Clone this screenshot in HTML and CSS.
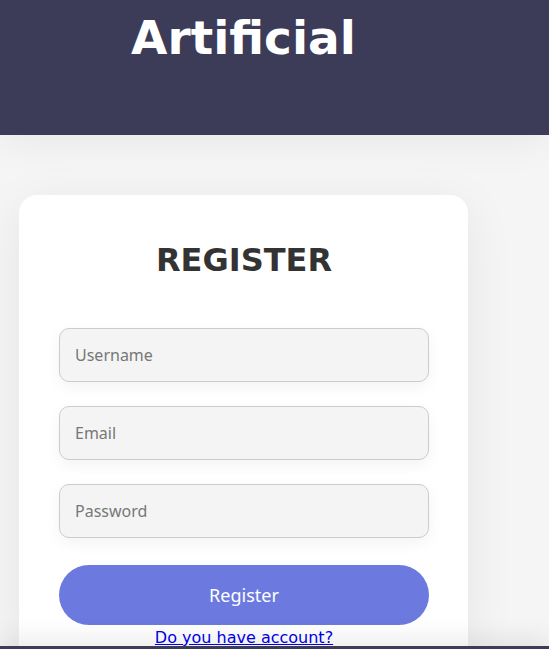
FILE: index.html
```html
<!DOCTYPE html>
<html lang="en">
<head>
<meta charset="utf-8">
<title>Register</title>
<link rel="stylesheet" href="styles.css">
</head>
<body>
<header class="header">
  <div class="header-inner">
    <h1 class="brand">Artificial</h1>
  </div>
</header>
<main class="main">
  <div class="card">
    <h2 class="card-title">REGISTER</h2>
    <form class="form">
      <input class="field" type="text" placeholder="Username">
      <input class="field" type="email" placeholder="Email">
      <input class="field" type="password" placeholder="Password">
      <button class="submit" type="button">Register</button>
    </form>
    <div class="switch"><a href="#" class="switch-link">Do you have account?</a></div>
  </div>
</main>
<footer class="footer"></footer>
</body>
</html>
```
FILE: styles.css
```css
html, body {
  margin: 0;
  padding: 0;
}
body {
  background: #f5f5f5;
  font-family: "DejaVu Sans", sans-serif;
  overflow: hidden;
}
.header {
  background: #3c3b58;
  height: 135px;
  box-shadow: 0 6px 40px rgba(0, 0, 0, 0.06);
  position: relative;
  z-index: 1;
}
.header-inner {
  width: 487px;
  padding-top: 10px;
}
.brand {
  margin: 0;
  color: #ffffff;
  font-family: "DejaVu Sans", sans-serif;
  font-weight: bold;
  font-size: 47px;
  text-align: center;
}
.main {
  width: 487px;
  padding-top: 60px;
}
.card {
  margin: 0 19px;
  background: #ffffff;
  border-radius: 18px 18px 0 0;
  padding: 40px 39px 0 40px;
  box-shadow: 0 10px 50px rgba(0, 0, 0, 0.07);
}
.card-title {
  margin: 6px 0 49px;
  font-family: "DejaVu Sans", sans-serif;
  font-weight: bold;
  font-size: 32px;
  color: #333333;
  text-align: center;
}
.form {
  display: flex;
  flex-direction: column;
  gap: 24px;
}
.field {
  box-sizing: border-box;
  width: 100%;
  height: 54px;
  margin: 0;
  padding: 0 15px;
  border: 1px solid #cccccc;
  border-radius: 10px;
  background: #f4f4f4;
  font-family: "Noto Sans", sans-serif;
  font-size: 16px;
  color: #333;
  box-shadow: 0 5px 15px rgba(0, 0, 0, 0.05);
  outline: none;
}
.field::placeholder {
  color: #777777;
}
.submit {
  margin-top: 3px;
  height: 60px;
  border: none;
  border-radius: 30px;
  background: #6c7ae0;
  color: #ffffff;
  font-family: "Noto Sans", sans-serif;
  font-size: 18px;
  cursor: pointer;
}
.switch {
  margin-top: 4px;
  line-height: 17px;
  text-align: center;
  font-size: 16px;
}
.switch-link {
  color: #0000ee;
  font-family: "DejaVu Sans", sans-serif;
}
.footer {
  position: relative;
  z-index: 2;
  height: 60px;
  background: #3c3b58;
  box-shadow: 0 -8px 25px rgba(0, 0, 0, 0.08);
}
```
